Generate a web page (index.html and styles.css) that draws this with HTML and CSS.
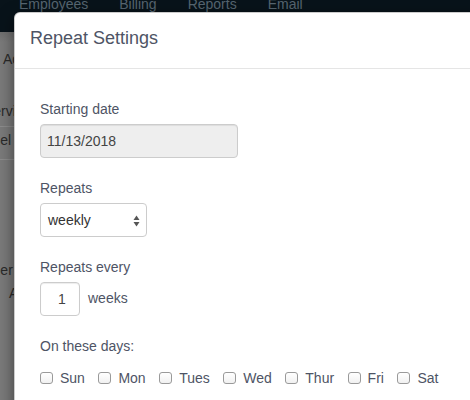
FILE: index.html
```html
<!DOCTYPE html>
<html lang="en">
<head>
<meta charset="utf-8">
<title>Repeat Settings</title>
<link rel="stylesheet" href="styles.css">
</head>
<body>
<div class="page">
  <nav class="navbar">
    <ul class="nav">
      <li>Employees</li>
      <li>Billing</li>
      <li>Reports</li>
      <li>Email</li>
    </ul>
  </nav>
  <div class="bg-content">
    <div class="frag frag-add">Add</div>
    <div class="frag frag-serv">Servi</div>
    <div class="frag frag-sel">Sel</div>
    <div class="frag frag-ber">Number</div>
    <div class="frag frag-a">A</div>
  </div>
</div>

<div class="modal">
  <div class="modal-header">
    <h4 class="modal-title">Repeat Settings</h4>
  </div>
  <div class="modal-body">
    <div class="form-group">
      <label class="control-label">Starting date</label>
      <input class="form-control date-input" type="text" value="11/13/2018" disabled>
    </div>
    <div class="form-group">
      <label class="control-label">Repeats</label>
      <div class="select-box">
        <span class="select-value">weekly</span>
        <svg class="select-arrows" width="7" height="12" viewBox="0 0 7 12">
          <path d="M3.5 0.5 L6.5 5 L0.5 5 Z" fill="#555"/>
          <path d="M0.5 7 L6.5 7 L3.5 11.5 Z" fill="#555"/>
        </svg>
      </div>
    </div>
    <div class="form-group">
      <label class="control-label">Repeats every</label>
      <div class="every-row">
        <input class="form-control num-input" type="text" value="1">
        <span class="unit">weeks</span>
      </div>
    </div>
    <div class="form-group">
      <label class="control-label">On these days:</label>
      <div class="days">
        <label class="day"><span class="cb"></span>Sun</label>
        <label class="day"><span class="cb"></span>Mon</label>
        <label class="day"><span class="cb"></span>Tues</label>
        <label class="day"><span class="cb"></span>Wed</label>
        <label class="day"><span class="cb"></span>Thur</label>
        <label class="day"><span class="cb"></span>Fri</label>
        <label class="day"><span class="cb"></span>Sat</label>
      </div>
    </div>
  </div>
</div>
</body>
</html>
```

FILE: styles.css
```css
* { box-sizing: border-box; }

html, body {
  margin: 0;
  padding: 0;
  width: 470px;
  height: 400px;
  overflow: hidden;
  font-family: "Liberation Sans", Arial, Helvetica, sans-serif;
  font-size: 14px;
  line-height: 20px;
}

body {
  position: relative;
  background: #7a7a7a;
}

.page {
  display: flex;
  flex-direction: column;
  height: 400px;
}

.navbar {
  height: 32px;
  background: #08131a;
  overflow: hidden;
  flex: none;
}

.nav {
  list-style: none;
  margin: -6px 0 0 0;
  padding: 0 0 0 19px;
  display: flex;
  gap: 31px;
  color: #566570;
  font-size: 14px;
  line-height: 20px;
}

.bg-content {
  flex: 1;
  background: linear-gradient(#6f6f6f, #7a7a7a 10px);
  display: flex;
  flex-direction: column;
  color: #2a2a2a;
  font-size: 14px;
  line-height: 20px;
  overflow: hidden;
}

.frag { white-space: nowrap; }
.frag-add { margin-top: 17px; padding-left: 3px; }
.frag-serv { margin-top: 32px; margin-left: -16px; padding-bottom: 5px; border-bottom: 1px solid #8c8c8c; width: 60px; }
.frag-sel { margin-top: 3px; margin-left: -9px; padding-bottom: 9px; border-bottom: 1px solid #8c8c8c; width: 60px; }
.frag-ber { margin-top: 100px; margin-left: -37px; }
.frag-a { margin-top: 3px; padding-left: 9px; }

.modal {
  position: absolute;
  left: 14px;
  top: 12px;
  right: -20px;
  bottom: -60px;
  background: #fff;
  border: 1px solid rgba(0, 0, 0, 0.2);
  border-radius: 6px;
  box-shadow: 0 5px 15px rgba(0, 0, 0, 0.5);
  color: #4e5465;
}

.modal-header {
  padding: 15px 15px 20px 15px;
  border-bottom: 1px solid #e5e5e5;
}

.modal-title {
  margin: 0;
  font-size: 18px;
  font-weight: normal;
  line-height: 20px;
  color: #4e5465;
}

.modal-body {
  padding: 30px 25px 0 25px;
}

.form-group {
  margin-bottom: 20px;
}

.control-label {
  display: block;
  margin-bottom: 5px;
  font-size: 14px;
  line-height: 20px;
  color: #4e5465;
}

.form-control {
  display: block;
  height: 34px;
  padding: 6px;
  font-family: inherit;
  font-size: 14px;
  line-height: 20px;
  color: #444;
  background: #fff;
  border: 1px solid #ccc;
  border-radius: 4px;
  box-shadow: inset 0 1px 1px rgba(0, 0, 0, 0.075);
  outline: none;
}

.date-input {
  width: 198px;
  background: #eee;
  color: #444;
  -webkit-text-fill-color: #444;
  opacity: 1;
}

.select-box {
  width: 107px;
  height: 34px;
  display: flex;
  align-items: center;
  justify-content: space-between;
  padding: 0 6px 0 7px;
  border: 1px solid #ccc;
  border-radius: 4px;
  background: #fff;
  color: #333;
}

.select-arrows {
  display: block;
  margin-top: 1px;
}

.every-row {
  display: flex;
  align-items: flex-start;
  gap: 8px;
}

.num-input {
  width: 40px;
  text-align: center;
  padding: 6px 0 6px 4px;
  color: #444;
}

.unit {
  padding-top: 6px;
  color: #4e5465;
}

.days {
  display: flex;
  align-items: center;
  gap: 13.5px;
  padding-top: 7px;
  white-space: nowrap;
}

.day {
  display: flex;
  align-items: center;
  color: #4e5465;
  line-height: 20px;
}

.cb {
  display: inline-block;
  width: 13px;
  height: 12px;
  margin-right: 7px;
  border: 1px solid #9a9a9a;
  border-radius: 3px;
  background: linear-gradient(#fff, #f1f1f1);
}
```
